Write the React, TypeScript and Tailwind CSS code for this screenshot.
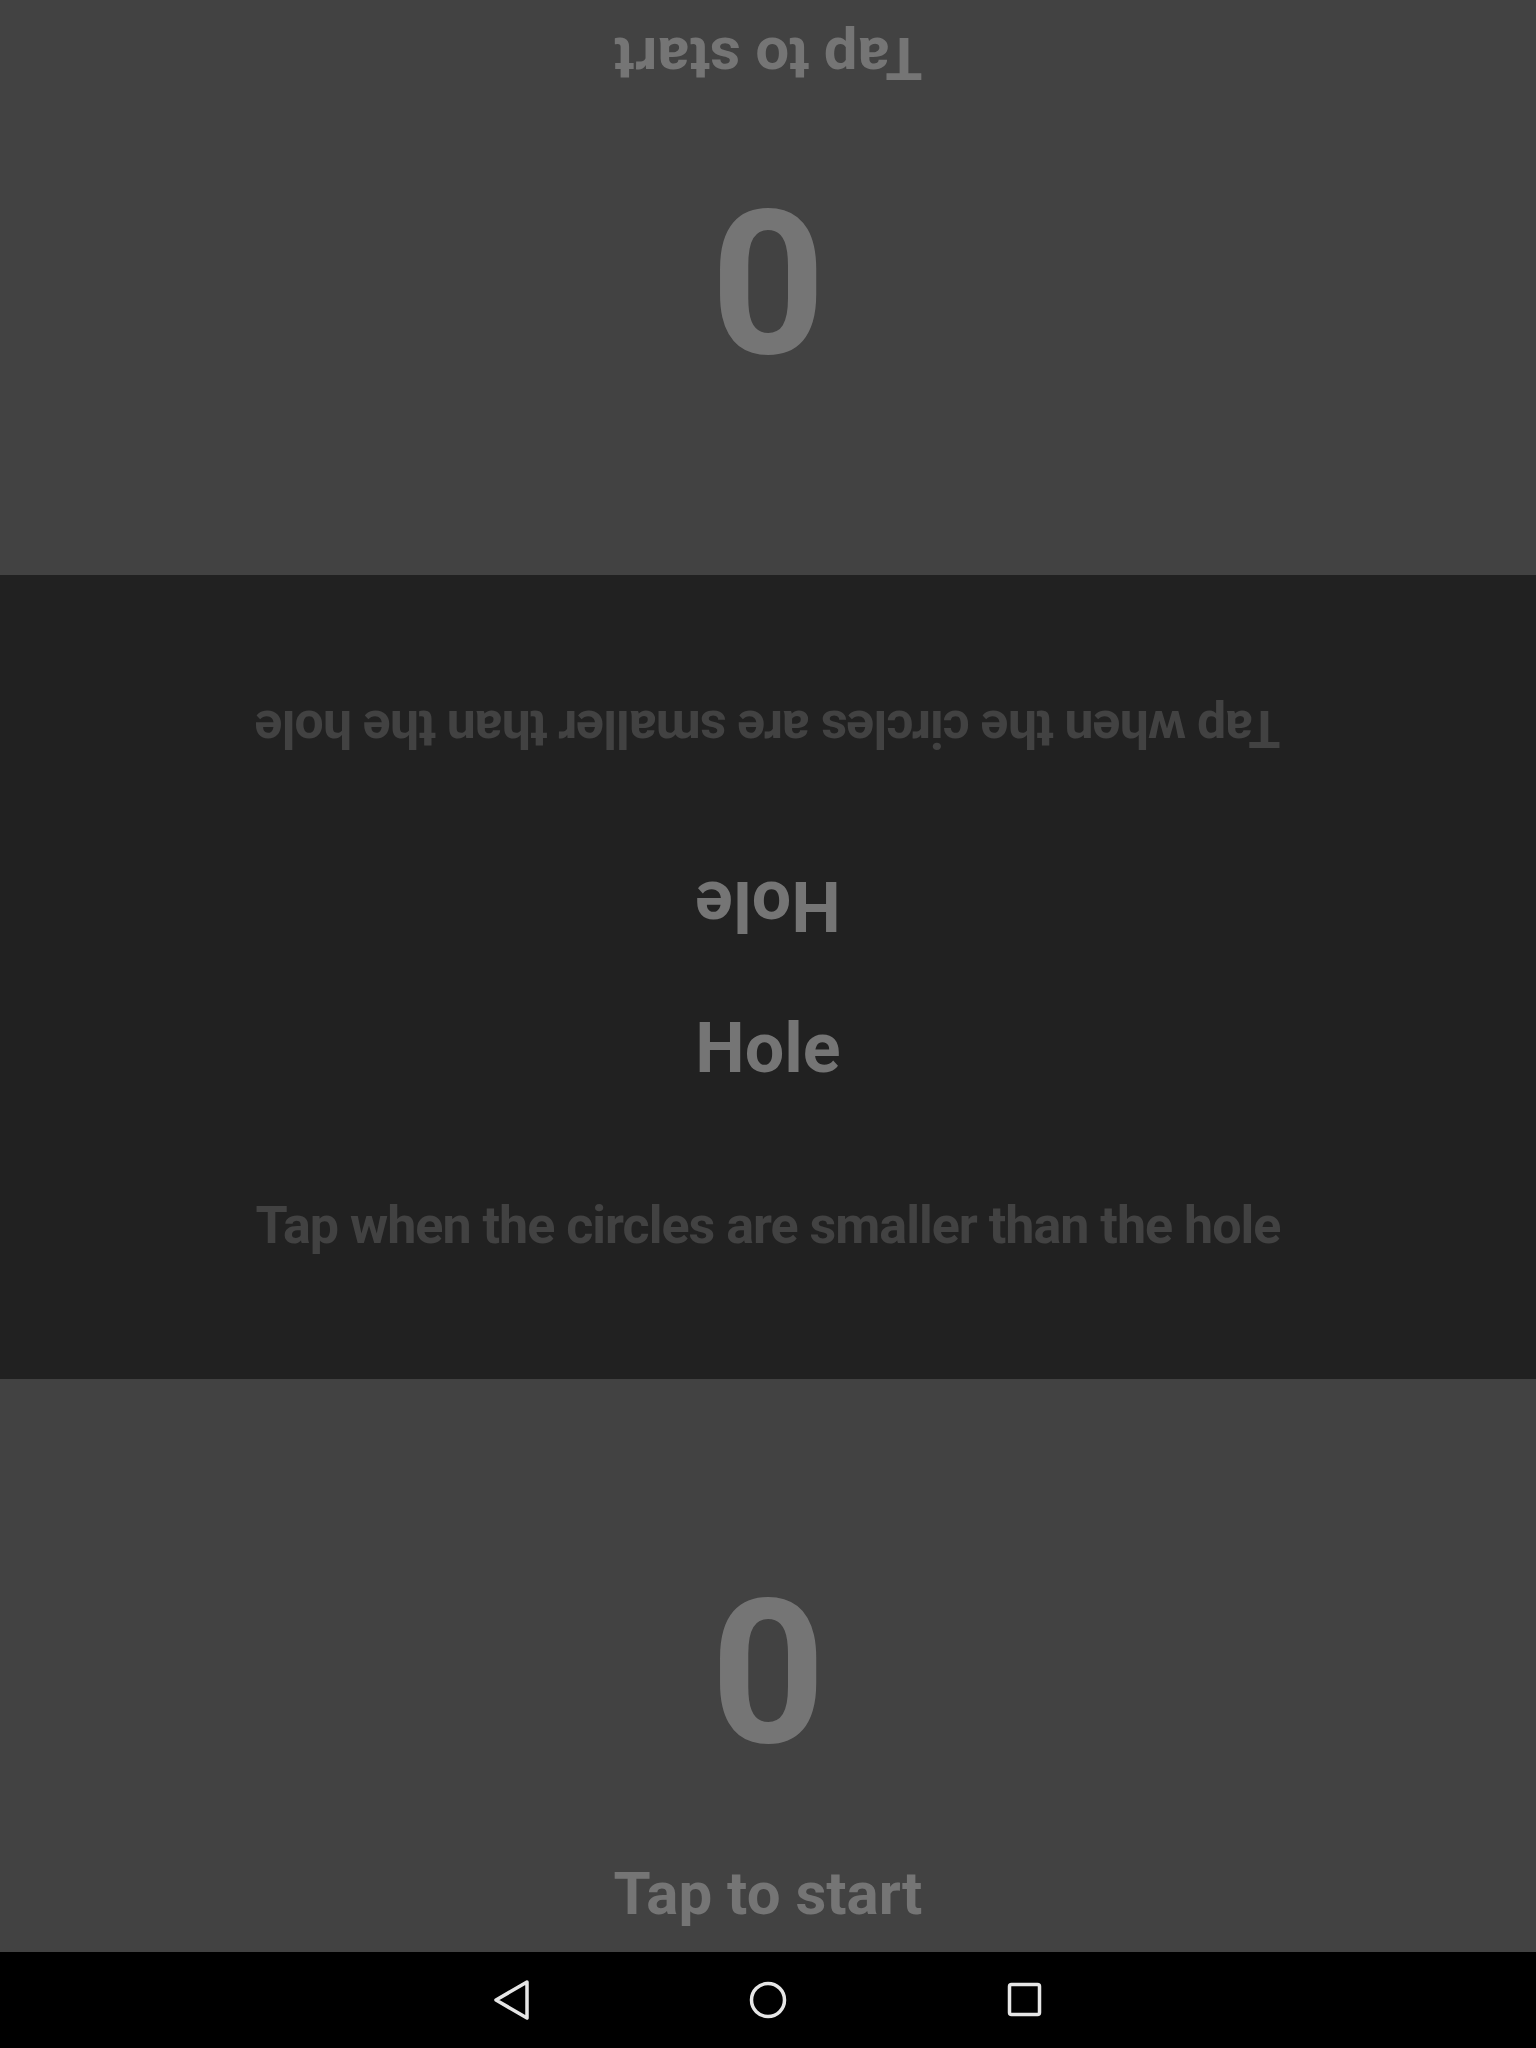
import React from "react";

function PlayerPanel({ heightClass, flipped }: { heightClass: string; flipped?: boolean }) {
  return (
    <div className={`${heightClass} w-full bg-[#424242] flex flex-col items-center justify-end ${flipped ? "rotate-180" : ""}`}>
      <div className="text-[200px] leading-none font-bold text-[#757575]">0</div>
      <div className="mt-[90px] mb-[28px] text-[60px] leading-none font-bold text-[#757575]">Tap to start</div>
    </div>
  );
}

function HalfInfo({ flipped }: { flipped?: boolean }) {
  return (
    <div className={`h-[402px] w-full flex flex-col items-center ${flipped ? "rotate-180" : ""}`}>
      <div className="mt-[36px] text-[70px] leading-none font-bold text-[#757575]">Hole</div>
      <div className="mt-[117px] text-[52px] leading-none font-bold tracking-[-1px] text-[#424242] whitespace-nowrap">
        Tap when the circles are smaller than the hole
      </div>
    </div>
  );
}

export default function App() {
  return (
    <div
      className="w-[1536px] h-[2048px] flex flex-col overflow-hidden"
      style={{ fontFamily: "Roboto, 'Liberation Sans', sans-serif" }}
    >
      <PlayerPanel heightClass="h-[575px]" flipped />
      <div className="h-[804px] w-full bg-[#212121] flex flex-col">
        <HalfInfo flipped />
        <HalfInfo />
      </div>
      <PlayerPanel heightClass="h-[573px]" />
      <div className="h-[96px] w-full bg-black flex items-center justify-center">
        <svg width="1536" height="96" viewBox="0 0 1536 96">
          <path
            d="M527 30 L496 48 L527 66 Z"
            fill="none"
            stroke="#e6e6e6"
            strokeWidth="3.5"
            strokeLinejoin="round"
          />
          <circle cx="768" cy="48" r="16.5" fill="none" stroke="#e6e6e6" strokeWidth="3.5" />
          <rect x="1009.5" y="32.5" width="30" height="30" rx="2" fill="none" stroke="#e6e6e6" strokeWidth="3.5" />
        </svg>
      </div>
    </div>
  );
}
